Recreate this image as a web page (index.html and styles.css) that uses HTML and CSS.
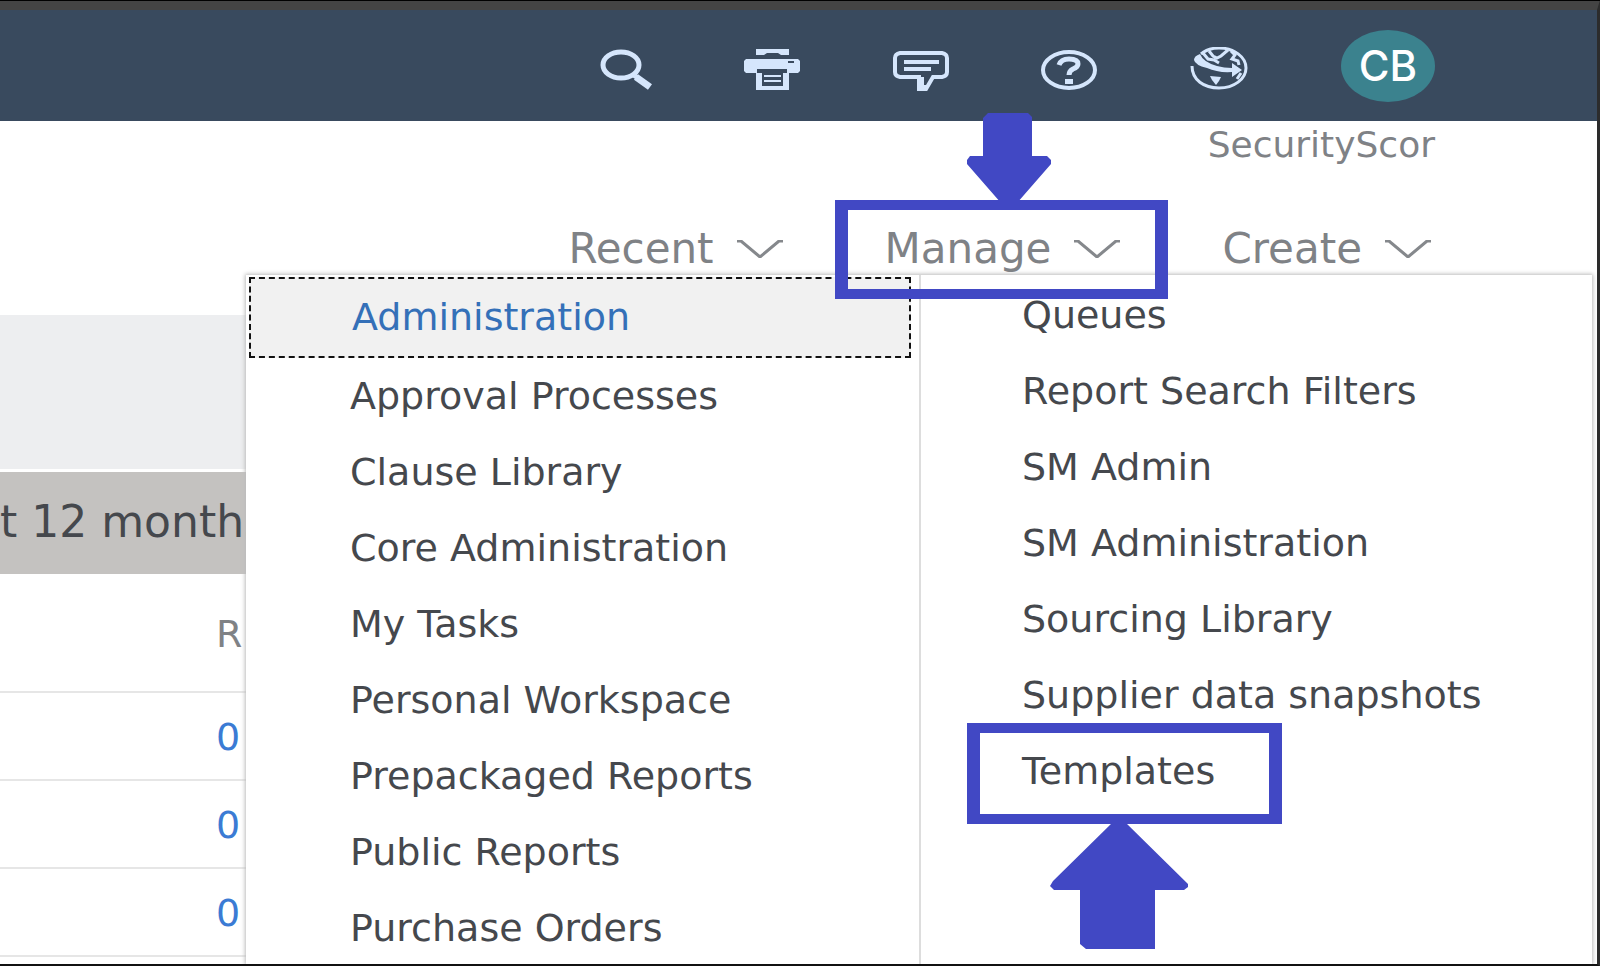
FILE: index.html
```
<!DOCTYPE html>
<html lang="en">
<head>
  <meta charset="UTF-8">
  <meta name="viewport" content="width=device-width, initial-scale=1.0">
  <title>Manage</title>
  <link rel="stylesheet" href="styles.css">
</head>
<body>
  <div class="window">
    <header class="topbar">
      <button class="icon-btn" aria-label="Search">
        <svg viewBox="0 0 58 44" fill="none" stroke="#d5e6fc">
          <ellipse cx="27" cy="16" rx="18" ry="13" stroke-width="5"/>
          <path d="M38 25l6 4" stroke-width="5"/>
          <path d="M42 28l14 10" stroke-width="7"/>
        </svg>
      </button>
      <button class="icon-btn" aria-label="Print">
        <svg viewBox="0 0 58 44" fill="#d5e6fc">
          <path d="M13 0h33v6h-8l-3-2H24l-3 2h-8z"/>
          <path fill-rule="evenodd" d="M3 10h52l2 2v10l-2 2H44v-4H14v4H3l-2-2V12zM45 12v2h6v-2z"/>
          <path fill-rule="evenodd" d="M13 24h6v13h21V24h6v17H13z"/>
          <path d="M21 26h17v2H21zM21 31h17v2H21z"/>
        </svg>
      </button>
      <button class="icon-btn" aria-label="Messages">
        <svg viewBox="0 0 58 44" fill="none" stroke="#d5e6fc">
          <path d="M8 4h42q5 1 5 5v14q0 4-5 5h-9l-7 12h-7V28H8q-5-1-5-5V9q0-4 5-5z" stroke-width="4"/>
          <path d="M26 28v13h8l3-5h-5v-8z" fill="#d5e6fc" stroke="none"/>
          <path d="M12 13h35M12 20h27" stroke-width="4"/>
        </svg>
      </button>
      <button class="icon-btn" aria-label="Help">
        <svg viewBox="0 0 58 44" fill="none" stroke="#d5e6fc">
          <ellipse cx="28" cy="21" rx="26" ry="18" stroke-width="4"/>
          <path d="M18 16q2-6 10-6 9 0 9 5 0 3-5 5-4 2-4 6" stroke-width="5"/>
          <path d="M24 30h8v5h-8z" fill="#d5e6fc" stroke="none"/>
        </svg>
      </button>
      <button class="icon-btn icon-btn-globe" aria-label="Language">
        <svg viewBox="0 0 58 44" fill="none" stroke="#d5e6fc">
          <path d="M11 7Q18 1 29 1c15 0 27 9 27 20S44 41 29 41 2 33 2 19" stroke-width="3"/>
          <path d="M4 13q0-4 6-6 3 8 17 12 7 2 15 2v-5l10 7-10 7v-5q-14 1-25-4Q5 18 4 13z" fill="#d5e6fc" stroke="none"/>
          <path d="M13 6l5 6 6 1 5 3M19 4l4 5 4 2 4-2 7-6M41 4l4 4-3 4 6 2 1 4M47 32l4-6" stroke-width="3"/>
          <path d="M20 29l11 1-2 4-3 4-4-5z" fill="#d5e6fc" stroke="none"/>
        </svg>
      </button>
      <button class="avatar">CB</button>
    </header>

    <div class="account">SecurityScor</div>

    <nav class="menubar">
      <button class="menu-btn">Recent
        <svg class="chevron" viewBox="0 0 46 18"><path d="M0 1h4l19 16L42 1h4"/></svg>
      </button>
      <button class="menu-btn menu-btn-marked">Manage
        <svg class="chevron" viewBox="0 0 46 18"><path d="M0 1h4l19 16L42 1h4"/></svg>
        <svg class="arrow-down" viewBox="0 0 84 90"><path d="M21 0h40l4 4v39h15l4 4v4L50 90H34L0 51v-4l3-4h13V5z"/></svg>
      </button>
      <button class="menu-btn">Create
        <svg class="chevron" viewBox="0 0 46 18"><path d="M0 1h4l19 16L42 1h4"/></svg>
      </button>
    </nav>

    <main class="content">
      <div class="band"></div>
      <div class="period">t 12 months</div>
      <table class="results">
        <thead>
          <tr><th>R</th></tr>
        </thead>
        <tbody>
          <tr><td><a href="#">0</a></td></tr>
          <tr><td><a href="#">0</a></td></tr>
          <tr><td><a href="#">0</a></td></tr>
        </tbody>
      </table>
    </main>

    <div class="dropdown">
      <ul class="dropdown-col">
        <li><a class="focused" href="#">Administration</a></li>
        <li><a href="#">Approval Processes</a></li>
        <li><a href="#">Clause Library</a></li>
        <li><a href="#">Core Administration</a></li>
        <li><a href="#">My Tasks</a></li>
        <li><a href="#">Personal Workspace</a></li>
        <li><a href="#">Prepackaged Reports</a></li>
        <li><a href="#">Public Reports</a></li>
        <li><a href="#">Purchase Orders</a></li>
      </ul>
      <ul class="dropdown-col">
        <li><a href="#">Queues</a></li>
        <li><a href="#">Report Search Filters</a></li>
        <li><a href="#">SM Admin</a></li>
        <li><a href="#">SM Administration</a></li>
        <li><a href="#">Sourcing Library</a></li>
        <li><a href="#">Supplier data snapshots</a></li>
        <li class="marked">
          <a href="#">Templates</a>
          <svg class="arrow-up" viewBox="0 0 138 126"><path d="M62 0h14l62 61v3l-4 3h-29v59H36l-6-5V67H4l-4-4 3-5z"/></svg>
        </li>
      </ul>
    </div>
  </div>
</body>
</html>
```
FILE: styles.css
```
*,
*::after {
  box-sizing: border-box;
}
body {
  margin: 0;
  font-family: "DejaVu Sans", Verdana, sans-serif;
  font-size: 38px;
  color: #45484d;
  background: #fff;
}
button {
  border: none;
  background: none;
  padding: 0;
  font: inherit;
  cursor: pointer;
}
a {
  text-decoration: none;
}
svg {
  display: block;
}
.window {
  position: relative;
  height: 100vh;
  overflow: hidden;
  border-top: 10px solid #444;
  border-right: 3px solid #2c2c2c;
  border-bottom: 2px solid #111;
}
.window::before {
  content: "";
  position: fixed;
  top: 0;
  left: 0;
  right: 0;
  height: 1px;
  background: #000;
}

/* top bar */
.topbar {
  display: flex;
  justify-content: flex-end;
  align-items: center;
  gap: 91px;
  height: 111px;
  padding-right: 162px;
  background: #394a5e;
}
.icon-btn {
  width: 58px;
  padding-top: 10px;
}
.icon-btn svg {
  width: 58px;
  height: 44px;
}
.icon-btn-globe {
  padding-top: 6px;
}
.avatar {
  width: 94px;
  height: 72px;
  margin-left: 2px;
  border-radius: 50%;
  background: #3b828e;
  color: #fff;
  font-family: Inter, sans-serif;
  font-size: 42px;
  font-weight: 500;
  line-height: 72px;
}

.account {
  padding-right: 162px;
  text-align: right;
  font-size: 36px;
  line-height: 48px;
  color: #7f8286;
}

/* menu buttons */
.menubar {
  display: flex;
  justify-content: flex-end;
  gap: 102px;
  height: 106px;
  padding: 54px 166px 0 0;
}
.menu-btn {
  position: relative;
  display: flex;
  align-items: center;
  gap: 23px;
  height: 52px;
  font-size: 42px;
  line-height: 52px;
  color: #7f8286;
}
.chevron {
  width: 46px;
  height: 18px;
  fill: none;
  stroke: #85888c;
  stroke-width: 3;
}
.menu-btn-marked {
  z-index: 3;
}
.menu-btn-marked::after {
  content: "";
  position: absolute;
  top: -23px;
  bottom: -24px;
  left: -50px;
  right: -48px;
  border: solid #4148c4;
  border-width: 10px 13px;
}
.arrow-down {
  position: absolute;
  top: -110px;
  right: 69px;
  width: 84px;
  height: 90px;
  fill: #4148c4;
}

/* page behind the menu */
.content {
  margin-right: 8px;
  padding-top: 40px;
}
.band {
  height: 154px;
  background: #edeef0;
}
.period {
  margin-top: 3px;
  height: 102px;
  background: #c4c2c0;
  font-size: 44px;
  line-height: 100px;
}
.results {
  width: 100%;
  border-collapse: collapse;
}
.results th,
.results td {
  height: 88px;
  padding: 2px 0 0 216px;
  border-bottom: 2px solid #e6e6e6;
  text-align: left;
  font-weight: normal;
}
.results th {
  height: 118px;
  color: #7f8286;
}
.results a {
  color: #3b7bd4;
}

/* open menu */
.dropdown {
  position: absolute;
  top: 265px;
  left: 246px;
  right: 5px;
  bottom: 0;
  z-index: 2;
  display: grid;
  grid-template-columns: 1fr 1fr;
  background: #fff;
  box-shadow: 0 0 4px 1px #bbb;
}
.dropdown-col {
  margin: 0;
  padding: 2px 8px 0 3px;
  list-style: none;
}
.dropdown-col + .dropdown-col {
  padding-left: 0;
  border-left: 2px solid #ddd;
}
.dropdown-col a {
  display: block;
  height: 76px;
  padding-left: 101px;
  line-height: 76px;
  white-space: nowrap;
  color: #45484d;
}
.dropdown-col .focused {
  height: 81px;
  line-height: 76px;
  border: 2px dashed #111;
  background: #f1f1f1;
  color: #3470b8;
}
.marked {
  position: relative;
}
.marked::after {
  content: "";
  position: absolute;
  top: -10px;
  bottom: -15px;
  left: 46px;
  width: 315px;
  border: solid #4148c4;
  border-width: 10px 13px;
}
.arrow-up {
  position: absolute;
  top: 90px;
  left: 129px;
  width: 138px;
  height: 126px;
  fill: #4148c4;
}
```
